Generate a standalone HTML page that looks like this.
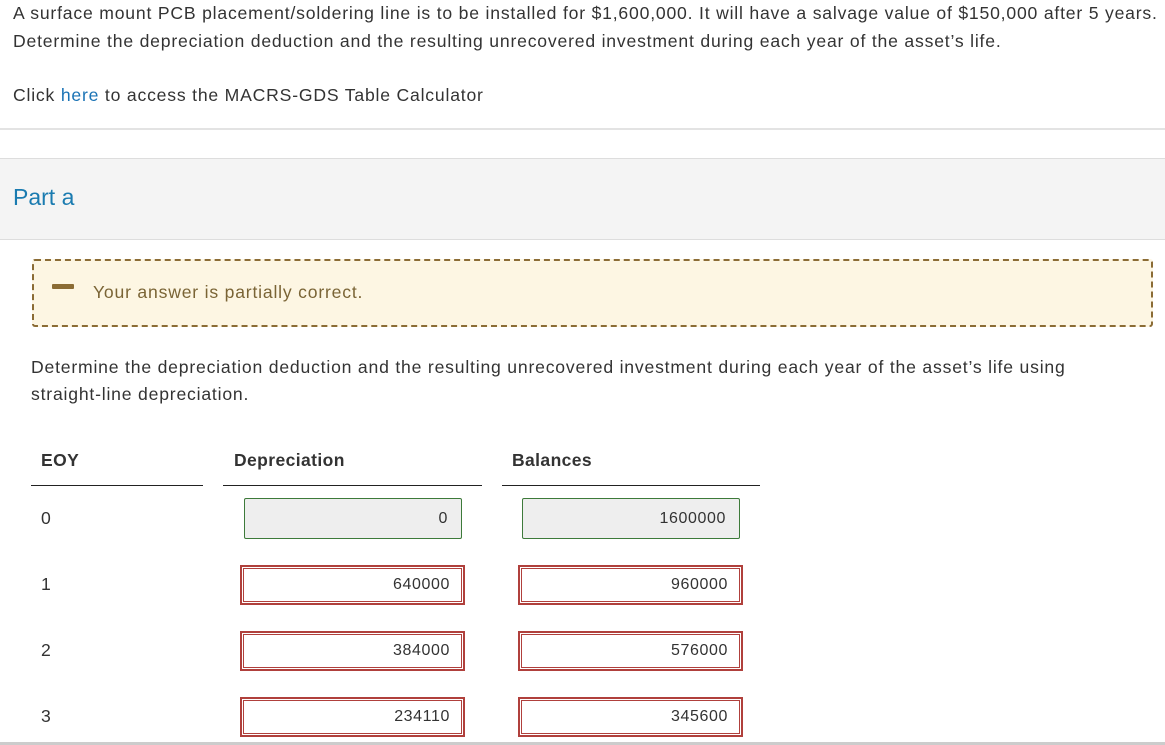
<!DOCTYPE html>
<html><head><style>
body{margin:0;width:1165px;height:745px;overflow:hidden;background:#fff;font-family:"Liberation Sans",sans-serif;color:#333;position:relative}
.a{position:absolute;white-space:nowrap}
.t{font-size:17.6px;letter-spacing:0.8px}
.box{position:absolute;box-sizing:border-box;text-align:right;font-size:16px;letter-spacing:0.6px;padding-right:13px;color:#333}
.g{background:#eee;border:1px solid #3d7a3a;border-radius:2px;height:41px;line-height:39px}
.r{border:2px solid #b0403c;height:40px;line-height:36px;box-shadow:inset 0 0 0 1px #fff,inset 0 0 0 2px #b0403c}
.hl{position:absolute;height:1px;background:#222;top:485px}
.h{position:absolute;top:450px;font-size:17.5px;letter-spacing:0.4px;font-weight:bold;color:#333}
</style></head><body>
<div class="a t" style="left:13px;top:3px">A surface mount PCB placement/soldering line is to be installed for $1,600,000. It will have a salvage value of $150,000 after 5 years.</div>
<div class="a t" style="left:13px;top:31px">Determine the depreciation deduction and the resulting unrecovered investment during each year of the asset’s life.</div>
<div class="a t" style="left:13px;top:85px">Click <span style="color:#1a73b5">here</span> to access the MACRS-GDS Table Calculator</div>
<div style="position:absolute;left:0;top:128px;width:1165px;height:2px;background:#e3e3e3"></div>
<div style="position:absolute;left:0;top:158px;width:1165px;height:80px;background:#f4f4f4;border-top:1px solid #ddd;border-bottom:1px solid #ddd"></div>
<div class="a" style="left:13px;top:184px;font-size:23px;color:#1a7bb0">Part a</div>
<div style="position:absolute;left:32px;top:259px;width:1121px;height:68px;box-sizing:border-box;background:#fdf6e3;border:2px dashed #8b6c35;border-radius:3px"></div>
<div style="position:absolute;left:52px;top:284px;width:22px;height:5px;background:#8b6c35;border-radius:1px"></div>
<div class="a t" style="left:93px;top:282px;color:#7a6435">Your answer is partially correct.</div>
<div class="a t" style="left:31px;top:357px">Determine the depreciation deduction and the resulting unrecovered investment during each year of the asset’s life using</div>
<div class="a t" style="left:31px;top:384px">straight-line depreciation.</div>
<div class="h" style="left:41px">EOY</div>
<div class="h" style="left:234px">Depreciation</div>
<div class="h" style="left:512px">Balances</div>
<div class="hl" style="left:31px;width:172px"></div>
<div class="hl" style="left:223px;width:259px"></div>
<div class="hl" style="left:502px;width:258px"></div>
<div class="a t" style="left:41px;top:508px">0</div>
<div class="a t" style="left:41px;top:574px">1</div>
<div class="a t" style="left:41px;top:640px">2</div>
<div class="a t" style="left:41px;top:706px">3</div>
<div class="box g" style="left:244px;top:498px;width:218px">0</div>
<div class="box g" style="left:522px;top:498px;width:218px">1600000</div>
<div class="box r" style="left:240px;top:565px;width:225px">640000</div>
<div class="box r" style="left:518px;top:565px;width:225px">960000</div>
<div class="box r" style="left:240px;top:631px;width:225px">384000</div>
<div class="box r" style="left:518px;top:631px;width:225px">576000</div>
<div class="box r" style="left:240px;top:697px;width:225px">234110</div>
<div class="box r" style="left:518px;top:697px;width:225px">345600</div>
<div style="position:absolute;left:0;top:742px;width:1165px;height:3px;background:#ccc"></div>
</body></html>
